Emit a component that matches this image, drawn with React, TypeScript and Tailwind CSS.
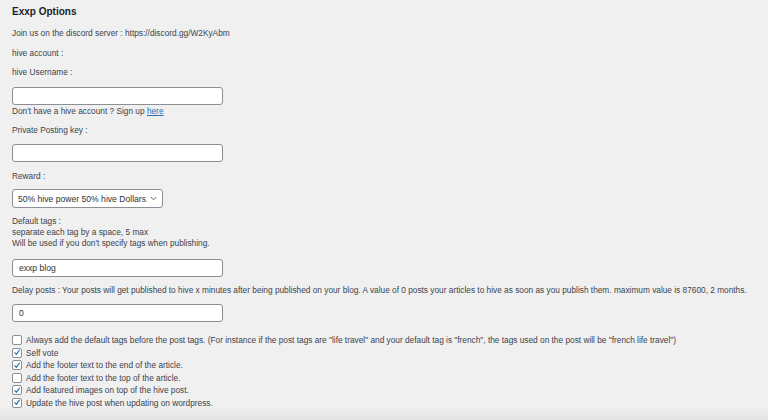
import React from "react";

const font = { fontFamily: '"Liberation Sans", Arial, sans-serif' };

function Check({ checked }: { checked: boolean }) {
  return (
    <span className="flex h-[10px] w-[10px] shrink-0 items-center justify-center rounded-[2px] border border-[#8c8f94] bg-white">
      {checked && (
        <svg width="9" height="9" viewBox="0 0 10 10">
          <path d="M2.2 5.2 L4.2 7.4 L8 2" fill="none" stroke="#2271b1" strokeWidth="1.3" strokeLinecap="round" strokeLinejoin="round" />
        </svg>
      )}
    </span>
  );
}

const boxes: [boolean, string][] = [
  [false, 'Always add the default tags before the post tags. (For instance if the post tags are "life travel" and your default tag is "french", the tags used on the post will be "french life travel")'],
  [true, "Self vote"],
  [true, "Add the footer text to the end of the article."],
  [false, "Add the footer text to the top of the article."],
  [true, "Add featured images on top of the hive post."],
  [true, "Update the hive post when updating on wordpress."],
];

function Input({ value }: { value?: string }) {
  return (
    <div className="flex h-[18px] w-[211px] items-center rounded-[3px] border border-[#8c8f94] bg-white pl-[6px] text-[8.6px] text-[#2c3338]">
      {value}
    </div>
  );
}

export default function App() {
  return (
    <div
      style={font}
      className="h-[420px] w-[768px] overflow-hidden bg-[linear-gradient(to_bottom,#f0f0f1_96.5%,#e3e3e3)] pl-[12px] text-[8.3px] leading-[12px] text-[#3c434a]"
    >
      <div className="flex flex-col">
        <div className="mt-[5px] text-[10px] font-bold leading-[14px] text-[#1d2327]">Exxp Options</div>
        <div className="mt-[8px]">Join us on the discord server : https://discord.gg/W2KyAbm</div>
        <div className="mt-[8px]">hive account :</div>
        <div className="mt-[7px]">hive Username :</div>
        <div className="mt-[9px]"><Input /></div>
        <div>
          Don't have a hive account ? Sign up <span className="text-[#2271b1] underline">here</span>
        </div>
        <div className="mt-[7px]">Private Posting key :</div>
        <div className="mt-[8px]"><Input /></div>
        <div className="mt-[8px]">Reward :</div>
        <div className="mt-[7px]">
          <div className="flex h-[19px] w-[151px] items-center justify-between rounded-[3px] border border-[#8c8f94] bg-white pl-[5px] pr-[5px] text-[8.6px] text-[#2c3338]">
            <span className="whitespace-nowrap">50% hive power 50% hive Dollars</span>
            <svg width="7" height="5" viewBox="0 0 7 5" className="shrink-0">
              <path d="M0.8 1 L3.5 3.8 L6.2 1" fill="none" stroke="#50575e" strokeWidth="0.9" />
            </svg>
          </div>
        </div>
        <div className="mt-[8px] leading-[11px]">
          <div>Default tags :</div>
          <div>separate each tag by a space, 5 max</div>
          <div>Will be used if you don't specify tags when publishing.</div>
        </div>
        <div className="mt-[10px]"><Input value="exxp blog" /></div>
        <div className="mt-[7px] whitespace-nowrap">
          Delay posts : Your posts will get published to hive x minutes after being published on your blog. A value of 0 posts your articles to hive as soon as you publish them. maximum value is 87600, 2 months.
        </div>
        <div className="mt-[8px]"><Input value="0" /></div>
        <div className="mt-[12px] flex flex-col">
          {boxes.map(([c, t], i) => (
            <div key={i} className="flex h-[12.5px] items-center gap-[4px]">
              <Check checked={c} />
              <span className="whitespace-nowrap">{t}</span>
            </div>
          ))}
        </div>
      </div>
    </div>
  );
}
